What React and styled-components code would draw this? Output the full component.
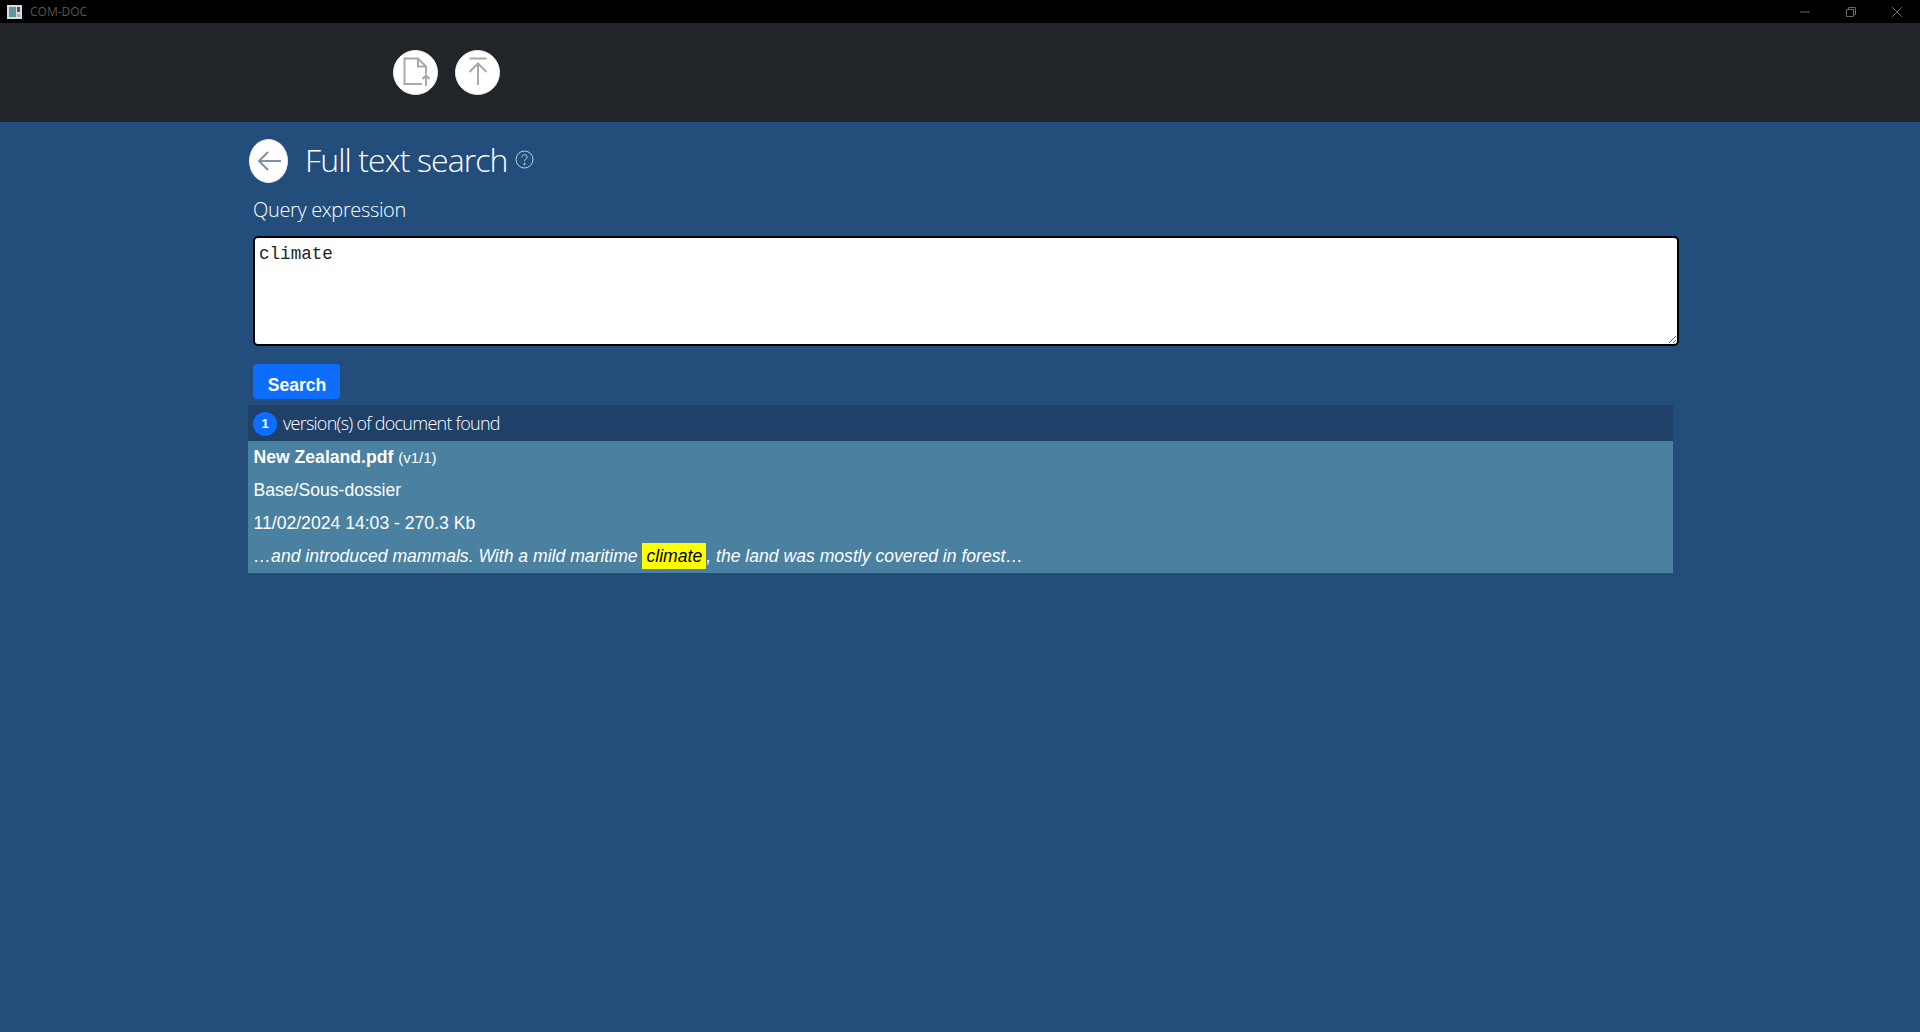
import React from "react";
import styled, { createGlobalStyle } from "styled-components";

const Global = createGlobalStyle`
  html, body { margin: 0; padding: 0; height: 100%; background: #234e7c; }
  #root { height: 100%; }
  * { box-sizing: border-box; }
`;

const Page = styled.div`
  display: flex;
  flex-direction: column;
  height: 1032px;
  overflow: hidden;
  background: #234e7c;
`;

const TitleBar = styled.div`
  flex: 0 0 23px;
  background: #000;
  display: flex;
  align-items: center;
  padding-left: 7px;
`;

const AppName = styled.span`
  margin-left: 8px;
  font: 400 12px "Open Sans", sans-serif;
  color: #555;
`;

const WindowButtons = styled.div`
  margin-left: auto;
  display: flex;
  color: #666;
`;

const WindowButton = styled.span`
  width: 46px;
  height: 23px;
  display: flex;
  align-items: center;
  justify-content: center;
`;

const Toolbar = styled.div`
  flex: 0 0 99px;
  background: #212529;
  display: flex;
  align-items: center;
  gap: 17px;
  padding: 0 0 1px 393px;
`;

const RoundButton = styled.button`
  width: ${(p) => p.$w}px;
  height: ${(p) => p.$h}px;
  border: 1px solid #eee;
  border-radius: 50%;
  background: #fff;
  padding: 0;
  display: flex;
  align-items: center;
  justify-content: center;
`;

const Content = styled.main`
  width: 1425px;
  margin-left: 248px;
  display: flex;
  flex-direction: column;
`;

const TitleRow = styled.div`
  display: flex;
  align-items: center;
  height: 44px;
  margin-top: 17px;
  padding-left: 1px;
`;

const Title = styled.h1`
  margin: 0 0 3px 17px;
  font: 300 32px/41px "Open Sans", sans-serif;
  letter-spacing: -0.9px;
  color: #fff;
`;

const HelpIcon = styled.svg`
  width: 19px;
  height: 19px;
  margin: 0 0 3px 7px;
  color: #c2cfdc;
`;

const Label = styled.label`
  margin: 15px 0 0 5px;
  font: 300 20px/24px "Open Sans", sans-serif;
  letter-spacing: -0.35px;
  color: #fff;
`;

const Query = styled.textarea`
  display: block;
  width: 1426px;
  height: 110px;
  margin: 14px 0 0 5px;
  padding: 6px 4px;
  border: 2px solid #000;
  border-radius: 5px;
  background: #fff;
  font: 400 17.6px/20px "Liberation Mono", monospace;
  letter-spacing: 0;
  color: #222;
  outline: none;
`;

const SearchButton = styled.button`
  width: 87px;
  height: 35px;
  margin: 18px 0 0 5px;
  padding: 7px 0 0 1px;
  border: none;
  border-radius: 4px;
  background: #0d6efd;
  color: #fff;
  font: 700 17.6px/24px "Liberation Sans", sans-serif;
`;

const ResultHead = styled.div`
  height: 36px;
  margin-top: 6px;
  padding-left: 5px;
  display: flex;
  align-items: center;
  background: #1f4068;
  font: 300 18px/24px "Open Sans", sans-serif;
  letter-spacing: -0.75px;
  color: #fff;
`;

const Badge = styled.span`
  width: 24px;
  height: 24px;
  margin: 1px 6px 0 0;
  border-radius: 50%;
  background: #0d6efd;
  display: flex;
  align-items: center;
  justify-content: center;
  font: 700 13px "Liberation Sans", sans-serif;
  letter-spacing: 0;
`;

const Result = styled.article`
  height: 132px;
  padding: 0 5.5px;
  background: #4a81a0;
  color: #fff;
`;

const Line = styled.p`
  margin: 0;
  font: ${(p) => (p.$italic ? "italic " : "")}400 17.6px/33px "Liberation Sans", sans-serif;
  white-space: nowrap;
`;

const FileName = styled.strong`
  font-weight: 700;
`;

const Version = styled.small`
  font-size: 15px;
`;

const Mark = styled.mark`
  background: #ff0;
  color: #000;
  padding: 3px 4px;
`;

const FileIcon = () => (
  <svg width="28" height="30" viewBox="-1 0 28 30" fill="none" stroke="#a9a9a9" strokeWidth="2">
    <path d="M19 27H1.500V1.500H15L23 9.500V17M15 1.500V9.500H23" />
    <path d="M23 29V18.500M19.500 22l3.500-3.500 3.500 3.500" />
  </svg>
);

const TopIcon = () => (
  <svg width="24" height="32" viewBox="0 0 24 32" fill="none" stroke="#a9a9a9" strokeWidth="2">
    <path d="M3.500 2.500h17M12 29V7.500M3.500 16L12 7.500l8.500 8.500" />
  </svg>
);

const BackIcon = () => (
  <svg width="26" height="26" viewBox="0 0 26 26" fill="none" stroke="#7f8fa6" strokeWidth="2">
    <path d="M25 13H3M12 4l-9 9 9 9" />
  </svg>
);

export default function App() {
  return (
    <Page>
      <Global />
      <TitleBar>
        <svg width="15" height="14" viewBox="0 0 15 14">
          <rect width="15" height="14" fill="#d8dde0" />
          <rect x="2" y="2" width="7" height="10" fill="#5d9a96" />
          <rect x="10" y="2" width="3" height="5" fill="#555" />
          <rect x="10" y="9" width="3" height="3" fill="#aab" />
        </svg>
        <AppName>COM-DOC</AppName>
        <WindowButtons>
          <WindowButton>
            <svg width="12" height="12" viewBox="0 0 12 12" stroke="currentColor" fill="none"><path d="M1 6h10" /></svg>
          </WindowButton>
          <WindowButton>
            <svg width="12" height="12" viewBox="0 0 12 12" stroke="currentColor" fill="none"><path d="M1.500 3.500h7v7h-7zM3.500 3V1.500h7v7H9" /></svg>
          </WindowButton>
          <WindowButton>
            <svg width="12" height="12" viewBox="0 0 12 12" stroke="currentColor" fill="none"><path d="M1 1l10 10M11 1L1 11" /></svg>
          </WindowButton>
        </WindowButtons>
      </TitleBar>
      <Toolbar>
        <RoundButton $w={45} $h={45} aria-label="Upload document"><FileIcon /></RoundButton>
        <RoundButton $w={45} $h={45} aria-label="Upload"><TopIcon /></RoundButton>
      </Toolbar>
      <Content>
        <TitleRow>
          <RoundButton $w={39} $h={44} aria-label="Back"><BackIcon /></RoundButton>
          <Title>Full text search</Title>
          <HelpIcon viewBox="0 0 19 19" fill="none" stroke="currentColor">
            <circle cx="9.500" cy="9.500" r="8.500" />
            <path d="M6.800 7.300c0-1.700 1.200-2.600 2.700-2.600s2.700.9 2.700 2.300c0 1.800-2.700 2-2.700 4.200" />
            <circle cx="9.500" cy="14" r=".7" fill="currentColor" />
          </HelpIcon>
        </TitleRow>
        <Label htmlFor="query">Query expression</Label>
        <Query id="query" defaultValue="climate" />
        <SearchButton>Search</SearchButton>
        <ResultHead>
          <Badge>1</Badge>
          version(s) of document found
        </ResultHead>
        <Result>
          <Line><FileName>New Zealand.pdf</FileName> <Version>(v1/1)</Version></Line>
          <Line>Base/Sous-dossier</Line>
          <Line>11/02/2024 14:03 - 270.3 Kb</Line>
          <Line $italic>…and introduced mammals. With a mild maritime <Mark>climate</Mark>, the land was mostly covered in forest…</Line>
        </Result>
      </Content>
    </Page>
  );
}
